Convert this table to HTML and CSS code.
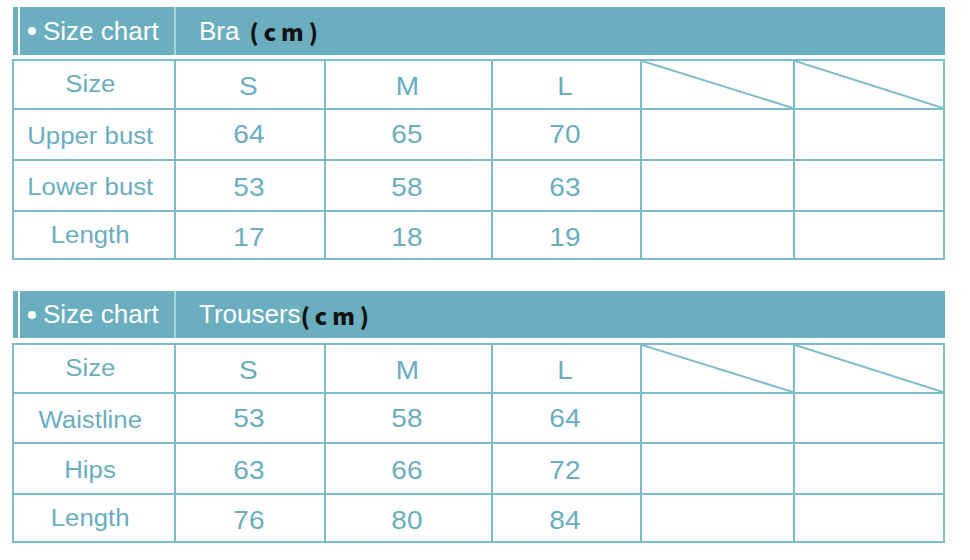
FILE: index.html
```html
<!DOCTYPE html>
<html>
<head>
<meta charset="utf-8">
<link rel="stylesheet" href="styles.css">
</head>
<body>
<div class="page">
  <section class="chart">
    <div class="head">
      <div class="bar"></div>
      <div class="band">
        <div class="band-label"><span class="dot"></span>Size chart</div>
        <div class="band-title">Bra<span class="unit">(cm)</span></div>
      </div>
    </div>
    <div class="grid g1">
      <div class="c lab"><span class="t">Size</span></div>
      <div class="c val low"><span class="n">S</span></div>
      <div class="c val low"><span class="n">M</span></div>
      <div class="c val low"><span class="n">L</span></div>
      <div class="c diag"><svg viewBox="0 0 100 100" preserveAspectRatio="none"><line x1="0" y1="0" x2="100" y2="100"/></svg></div>
      <div class="c diag"><svg viewBox="0 0 100 100" preserveAspectRatio="none"><line x1="0" y1="0" x2="100" y2="100"/></svg></div>

      <div class="c lab low"><span class="t">Upper bust</span></div>
      <div class="c val"><span class="n">64</span></div>
      <div class="c val"><span class="n">65</span></div>
      <div class="c val"><span class="n">70</span></div>
      <div class="c"></div>
      <div class="c"></div>

      <div class="c lab low"><span class="t">Lower bust</span></div>
      <div class="c val low"><span class="n">53</span></div>
      <div class="c val low"><span class="n">58</span></div>
      <div class="c val low"><span class="n">63</span></div>
      <div class="c"></div>
      <div class="c"></div>

      <div class="c lab"><span class="t">Length</span></div>
      <div class="c val low"><span class="n">17</span></div>
      <div class="c val low"><span class="n">18</span></div>
      <div class="c val low"><span class="n">19</span></div>
      <div class="c"></div>
      <div class="c"></div>
    </div>
  </section>

  <section class="chart second">
    <div class="head">
      <div class="bar"></div>
      <div class="band">
        <div class="band-label"><span class="dot"></span>Size chart</div>
        <div class="band-title">Trousers<span class="unit tight">(cm)</span></div>
      </div>
    </div>
    <div class="grid g2">
      <div class="c lab"><span class="t">Size</span></div>
      <div class="c val low"><span class="n">S</span></div>
      <div class="c val low"><span class="n">M</span></div>
      <div class="c val low"><span class="n">L</span></div>
      <div class="c diag"><svg viewBox="0 0 100 100" preserveAspectRatio="none"><line x1="0" y1="0" x2="100" y2="100"/></svg></div>
      <div class="c diag"><svg viewBox="0 0 100 100" preserveAspectRatio="none"><line x1="0" y1="0" x2="100" y2="100"/></svg></div>

      <div class="c lab low"><span class="t">Waistline</span></div>
      <div class="c val"><span class="n">53</span></div>
      <div class="c val"><span class="n">58</span></div>
      <div class="c val"><span class="n">64</span></div>
      <div class="c"></div>
      <div class="c"></div>

      <div class="c lab low"><span class="t">Hips</span></div>
      <div class="c val low"><span class="n">63</span></div>
      <div class="c val low"><span class="n">66</span></div>
      <div class="c val low"><span class="n">72</span></div>
      <div class="c"></div>
      <div class="c"></div>

      <div class="c lab"><span class="t">Length</span></div>
      <div class="c val low"><span class="n">76</span></div>
      <div class="c val low"><span class="n">80</span></div>
      <div class="c val low"><span class="n">84</span></div>
      <div class="c"></div>
      <div class="c"></div>
    </div>
  </section>
</div>
</body>
</html>
```

FILE: styles.css
```css
html, body {
  margin: 0;
  padding: 0;
  background: #ffffff;
}

.page {
  width: 970px;
  height: 560px;
  padding: 7px 0 0 12px;
  box-sizing: border-box;
  font-family: "Liberation Sans", Arial, sans-serif;
}

.chart {
  display: flex;
  flex-direction: column;
  gap: 4px;
  width: 933px;
}

.chart.second {
  margin-top: 31px;
}

.head {
  display: flex;
  height: 48px;
  padding-left: 1px;
  gap: 2px;
}

.second .head {
  height: 47px;
}

.second .grid {
  margin-top: 1px;
}

.bar {
  width: 5px;
  background: #6aaebf;
}

.band {
  flex: 1;
  display: flex;
  background: #6aaebf;
  color: #ffffff;
  font-size: 26px;
}

.band-label {
  width: 156px;
  display: flex;
  align-items: center;
  padding-left: 8px;
  box-sizing: border-box;
  border-right: 2px solid #a9d3dd;
}

.dot {
  display: inline-block;
  width: 8px;
  height: 8px;
  border-radius: 50%;
  background: #ffffff;
  margin-right: 7px;
}

.band-title {
  flex: 1;
  display: flex;
  align-items: center;
  padding-left: 23px;
}

.unit {
  font-family: "Noto Sans CJK SC", sans-serif;
  font-weight: 900;
  font-size: 23px;
  letter-spacing: 5px;
  color: #111111;
  margin-left: 10px;
}

.unit.tight {
  margin-left: 0;
}

.grid {
  display: grid;
  grid-template-columns: 160px 148px 165px 147px 151px 148px;
  gap: 2px;
  padding: 2px;
  background: #7fbccb;
  width: 933px;
  box-sizing: border-box;
}

.g1 {
  grid-template-rows: 47px 49px 49px 46px;
}

.g2 {
  grid-template-rows: 47px 48px 49px 46px;
}

.c {
  background: #ffffff;
  display: flex;
  align-items: center;
  justify-content: center;
  color: #6aadbf;
}

.low {
  padding-top: 4px;
}

.lab {
  padding-right: 8px;
  font-size: 23px;
}

.val {
  padding-right: 3px;
  font-size: 25px;
}

.t {
  display: inline-block;
  transform: scaleX(1.12);
}

.n {
  display: inline-block;
  transform: scaleX(1.12);
}

.diag svg {
  width: 100%;
  height: 100%;
  display: block;
}

.diag line {
  stroke: #7fbccb;
  stroke-width: 2;
  vector-effect: non-scaling-stroke;
}
```
